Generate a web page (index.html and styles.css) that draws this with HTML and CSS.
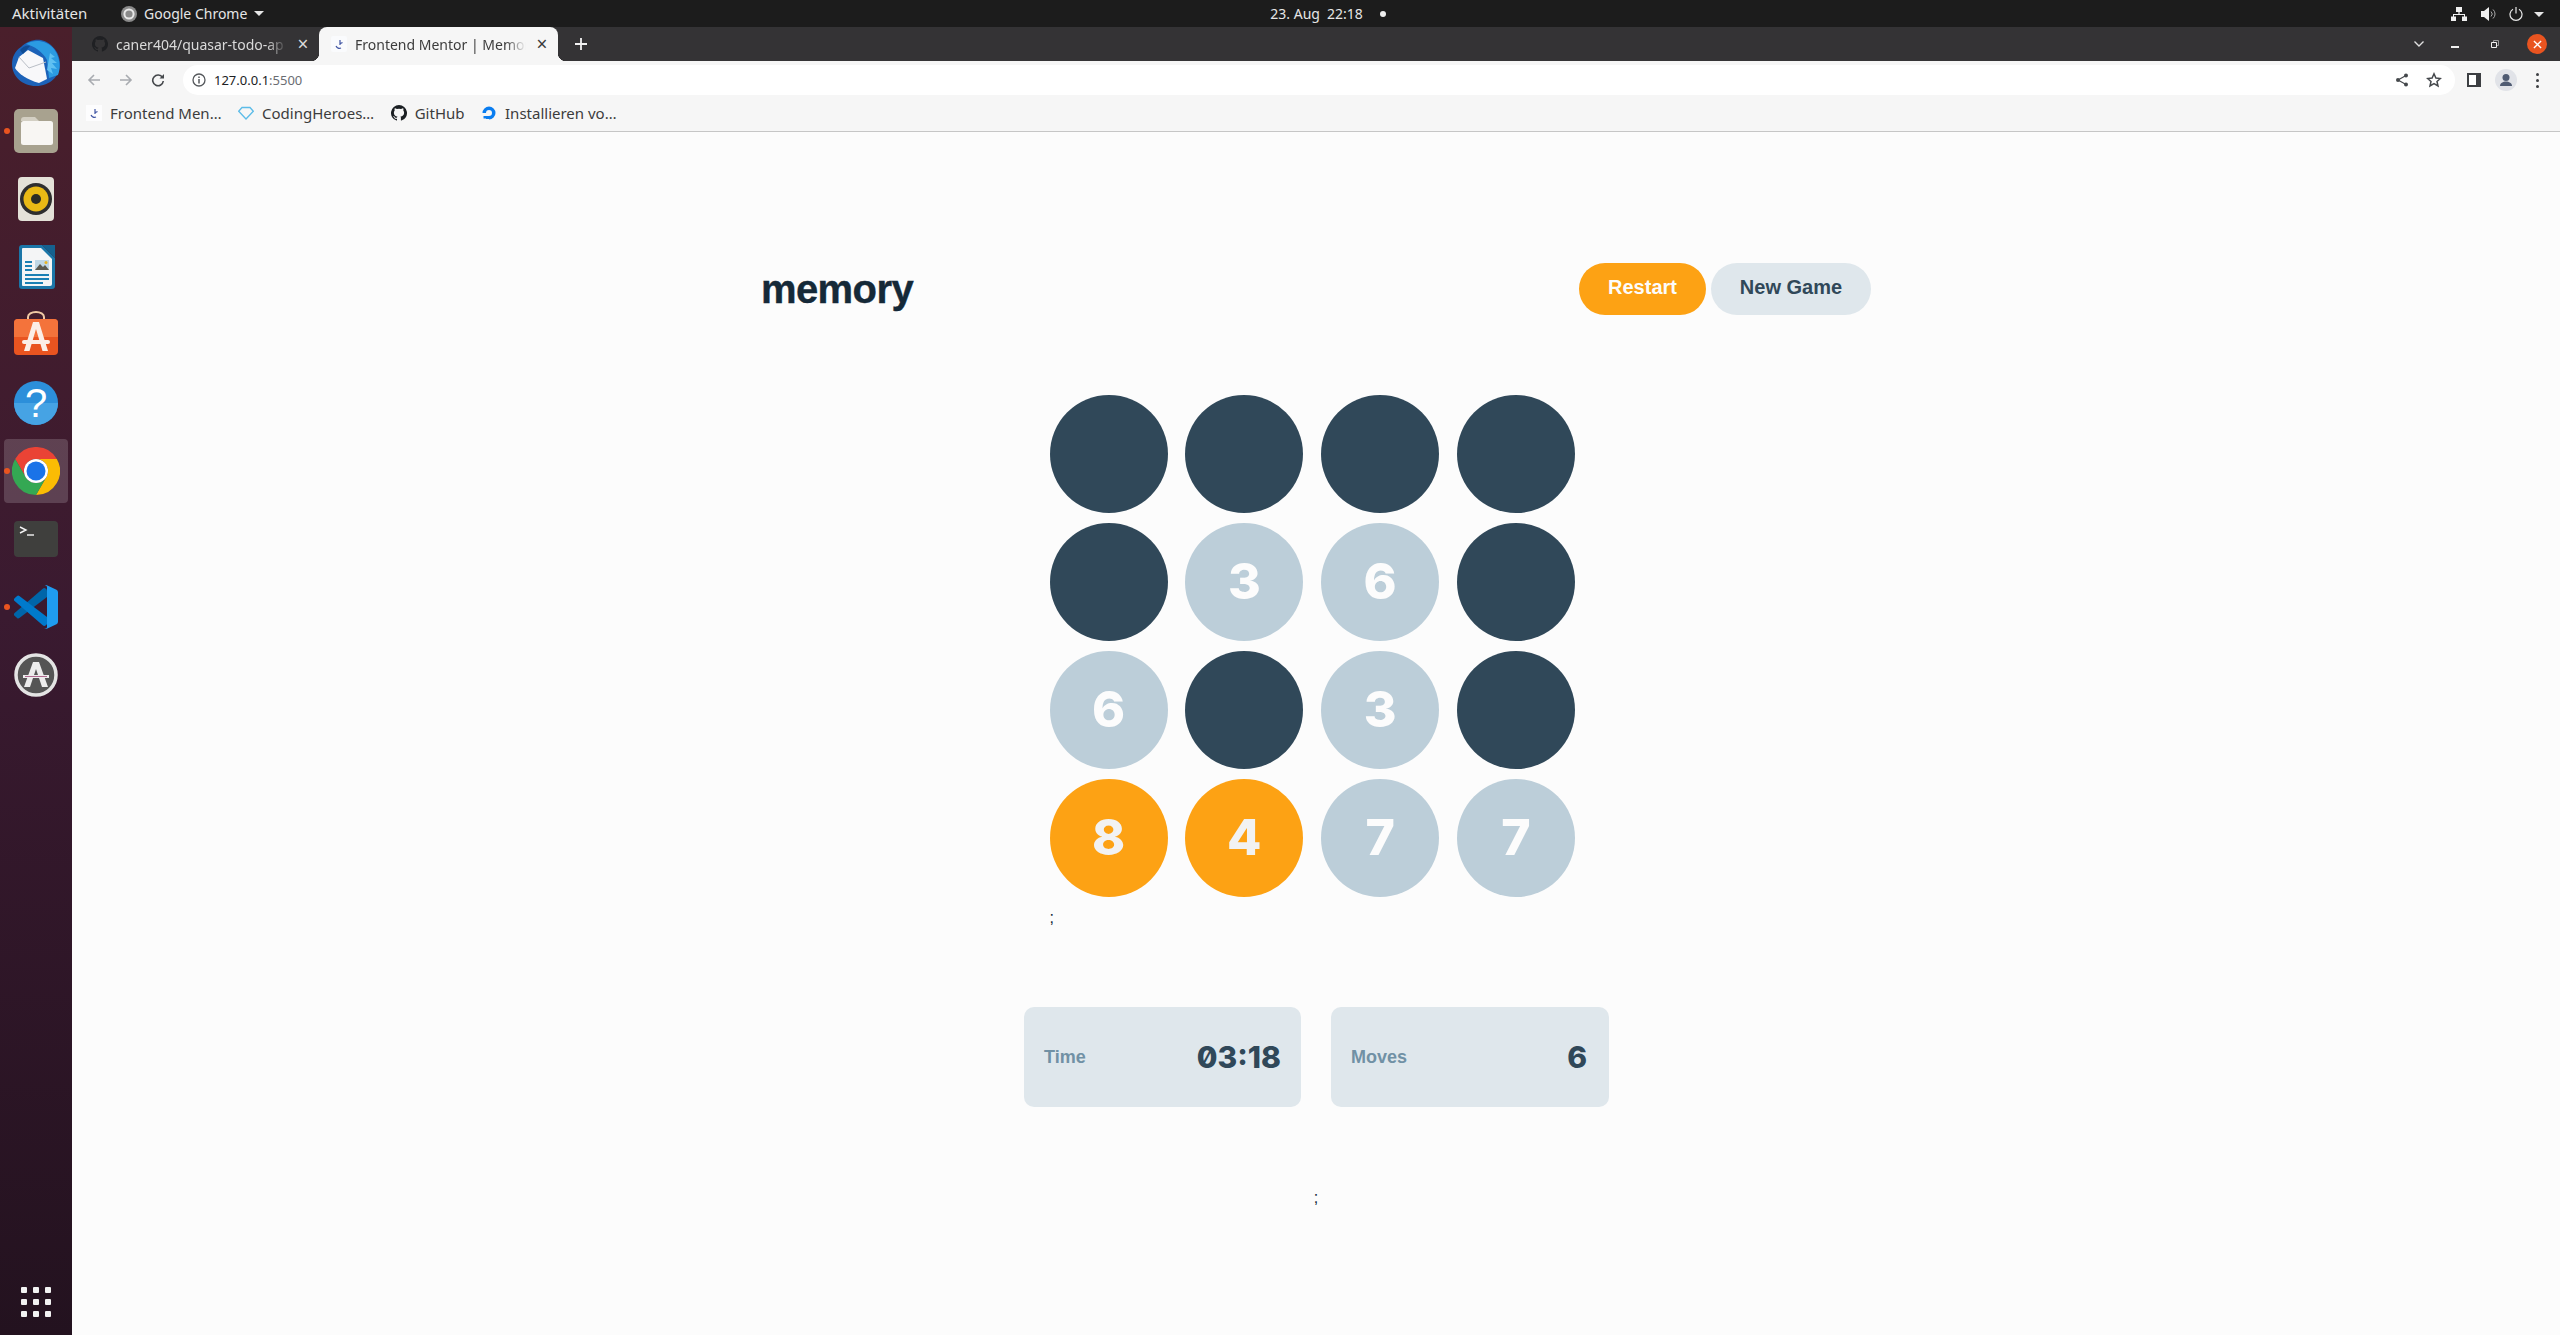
FILE: index.html
```html
<!DOCTYPE html>
<html lang="de">
<head>
<meta charset="utf-8">
<title>Frontend Mentor | Memory game</title>
<link rel="stylesheet" href="styles.css">
</head>
<body>
<header class="topbar">
  <div class="top-left">
    <span class="activities">Aktivitäten</span>
    <span class="app-menu">
      <svg class="app-icon" viewBox="0 0 16 16"><circle cx="8" cy="8" r="8" fill="#8a8a8a"/><circle cx="8" cy="8" r="4.6" fill="none" stroke="#e8e8e8" stroke-width="2"/></svg>
      <span>Google Chrome</span>
      <i class="caret"></i>
    </span>
  </div>
  <div class="clock"><span>23. Aug</span><span>22:18</span><i class="clock-dot"></i></div>
  <div class="tray">
    <svg class="tray-net" viewBox="0 0 16 14"><path d="M5 0h6v5H8.600v2H14v2.500h2V14h-5V9.500h2V8H3v1.500h2V14H0V9.500h2V7h5.400V5H5z" fill="#f0f0f0"/></svg>
    <svg class="tray-vol" viewBox="0 0 15 14"><path d="M0 4h3l5-4v14l-5-4H0z" fill="#f0f0f0"/><path d="M10 4.500a3.500 3.500 0 0 1 0 5M12 2.500a6 6 0 0 1 0 9" fill="none" stroke="#aaa" stroke-width="1"/></svg>
    <svg class="tray-pow" viewBox="0 0 14 14"><path d="M4 2.200a6 6 0 1 0 6 0M7 0v6.500" fill="none" stroke="#e8e8e8" stroke-width="1.200"/></svg>
    <i class="caret tray-caret"></i>
  </div>
</header>

<div class="desktop">
  <nav class="dock">
    <div class="dock-item">
      <svg class="ic-48" viewBox="0 0 48 48">
        <path d="M9 8C15 2 23 0 29 1c9 2 19 11 19 24 0 12-10 22-24 22C10 47 0 37 0 25c0-7 3-13 9-17z" fill="#1c62b8"/>
        <path d="M14 5c8-5 21-4 28 5 6 8 7 18 4 26l-9 3-2-18C31 13 22 7 14 5z" fill="#2b9be2"/>
        <path d="M38 14l5 4-4 1 6 5-5 0 5 6-6-1 2 6-6-4z" fill="#5fc0f2"/>
        <path d="M7 18l9-7 15 8 4 21-8 4C15 41 6 34 3 29z" fill="#f8f8fa"/>
        <path d="M7 18l10 11 17-6" fill="none" stroke="#b9bec6" stroke-width="1"/>
        <path d="M8 11c3-4 7-5 10-4l-7 8z" fill="#0f4c94"/>
      </svg>
    </div>
    <div class="dock-item running">
      <svg class="ic-44" viewBox="0 0 44 44">
        <rect width="44" height="44" rx="5" fill="#a8a28f"/>
        <path d="M7 11a3 3 0 0 1 3-3h11l4 4H7z" fill="#d3cfc3"/>
        <rect x="7" y="12" width="32" height="24" rx="2.500" fill="#f8f6f3"/>
      </svg>
    </div>
    <div class="dock-item">
      <svg class="ic-44" viewBox="0 0 44 44">
        <rect x="4" y="0" width="36" height="44" rx="4" fill="#e4e1d8"/>
        <circle cx="22" cy="22" r="16" fill="#2e2e2e"/>
        <circle cx="22" cy="22" r="12.500" fill="#e9b915"/>
        <circle cx="22" cy="22" r="5" fill="#2b2b25"/>
      </svg>
    </div>
    <div class="dock-item">
      <svg class="ic-44" viewBox="0 0 44 44">
        <path d="M5 3a3 3 0 0 1 3-3h20l13 13v28a3 3 0 0 1-3 3H8a3 3 0 0 1-3-3z" fill="#1b76a8"/>
        <path d="M8 4a1 1 0 0 1 1-1h18l11 11v25a2 2 0 0 1-2 2H9a1 1 0 0 1-1-1z" fill="#f4f5f6"/>
        <path d="M28 0h13v13z" fill="#15618f"/>
        <path d="M11 16h7v2h-7zM11 20h7v2h-7zM11 24h7v2h-7zM11 29h24v2H11zM11 33h24v2H11zM11 37h18v2H11z" fill="#1b80b4"/>
        <rect x="21" y="15" width="14" height="10" fill="#bfd8e6"/>
        <path d="M21 25l5-6 3 3 2-2 4 5z" fill="#5a5a50"/>
        <circle cx="32" cy="17.500" r="1.500" fill="#e6b422"/>
      </svg>
    </div>
    <div class="dock-item">
      <svg class="ic-44 ic-bag" viewBox="0 2 44 44">
        <path d="M14 8V6a8 5 0 0 1 16 0v2" fill="none" stroke="#f0c9a4" stroke-width="2"/>
        <rect y="8" width="44" height="36" rx="4" fill="#e95420"/>
        <path d="M0 12a4 4 0 0 1 4-4h36a4 4 0 0 1 4 4v14H0z" fill="#f4733b"/>
        <path d="M19 11h6l9 29h-5.500L22 18l-6.500 22H10z" fill="#fbeee6"/>
        <rect x="8" y="29" width="28" height="4" rx="2" fill="#fbeee6"/>
      </svg>
    </div>
    <div class="dock-item">
      <svg class="ic-44" viewBox="0 0 44 44">
        <circle cx="22" cy="22" r="22" fill="#2c8fda"/>
        <path d="M0 22h44a22 22 0 0 1-44 0z" fill="#46a3e4"/>
        <text x="22" y="36" class="help-mark">?</text>
      </svg>
    </div>
    <div class="dock-item running active">
      <svg class="ic-48" viewBox="0 0 48 48">
        <path d="M24 12H44.800A24 24 0 0 0 3.200 12L13.600 30A12 12 0 0 1 24 12z" fill="#ea4335"/>
        <path d="M24 12H44.800A24 24 0 0 1 24 48L34.400 30A12 12 0 0 0 24 12z" fill="#fbbc04"/>
        <path d="M3.200 12A24 24 0 0 0 24 48L34.400 30A12 12 0 0 1 13.600 30z" fill="#34a853"/>
        <circle cx="24" cy="24" r="12" fill="#fff"/>
        <circle cx="24" cy="24" r="9.500" fill="#1a73e8"/>
      </svg>
    </div>
    <div class="dock-item">
      <svg class="ic-term" viewBox="0 0 44 36">
        <rect width="44" height="36" rx="4" fill="#3f3f3d"/>
        <path d="M6 6l6 3-6 3" fill="none" stroke="#f4f4f4" stroke-width="1.400"/>
        <path d="M13 14h7" stroke="#f4f4f4" stroke-width="1.400"/>
      </svg>
    </div>
    <div class="dock-item running">
      <svg class="ic-44" viewBox="0 0 100 100">
        <path d="M1.400 63.600a4.200 4.200 0 0 0 0 6.200l5.500 5a4.200 4.200 0 0 0 5.300.2L75 27.300V13a6 6 0 0 0-9.700-4.600z" fill="#0065a9"/>
        <path d="M1.400 36.400a4.200 4.200 0 0 1 0-6.200l5.500-5a4.200 4.200 0 0 1 5.300-.2L75 72.700V87a6 6 0 0 1-9.700 4.600z" fill="#007acc"/>
        <path d="M68.800 97.900a6.200 6.200 0 0 0 7.100 1.200l20.600-9.900a6.200 6.200 0 0 0 3.500-5.600V16.400a6.200 6.200 0 0 0-3.500-5.600L75.900.9a6.200 6.200 0 0 0-7.100 1.200c2.300-2.300 6.200-.7 6.200 2.600v90.600c0 3.300-3.900 4.900-6.200 2.600z" fill="#1f9cf0"/>
      </svg>
    </div>
    <div class="dock-item">
      <svg class="ic-44" viewBox="0 0 44 44">
        <circle cx="22" cy="22" r="20" fill="#555" stroke="#e4e4e4" stroke-width="3.500"/>
        <path d="M19 9h6l9 25h-6l-6-18-6 18h-6z" fill="#ececec"/>
        <rect x="9" y="22" width="26" height="3" fill="#ececec"/>
        <rect x="11" y="23" width="22" height="1" fill="#b06a90"/>
      </svg>
    </div>
    <div class="dock-apps">
      <i></i><i></i><i></i><i></i><i></i><i></i><i></i><i></i><i></i>
    </div>
  </nav>

  <div class="window">
    <div class="tabstrip">
      <div class="tab">
        <svg class="fav" viewBox="0 0 16 16"><path d="M8 0a8 8 0 0 0-2.500 15.600c.4.100.5-.2.500-.4v-1.400c-2.200.5-2.700-1-2.700-1-.4-.9-.9-1.200-.9-1.200-.7-.5.100-.5.100-.5.800.1 1.200.8 1.200.8.700 1.200 1.900.9 2.300.7.100-.5.300-.9.500-1.100-1.800-.2-3.600-.9-3.600-4 0-.9.300-1.600.8-2.100-.1-.2-.4-1 .1-2.100 0 0 .7-.2 2.200.8a7.600 7.600 0 0 1 4 0c1.500-1 2.200-.8 2.200-.8.400 1.100.2 1.900.1 2.100.5.600.8 1.300.8 2.100 0 3.100-1.900 3.800-3.700 4 .3.300.5.800.5 1.500v2.200c0 .2.100.5.600.4A8 8 0 0 0 8 0z" fill="#1f2023"/></svg>
        <span class="tab-title">caner404/quasar-todo-ap</span>
        <span class="tab-x">×</span>
      </div>
      <div class="tab tab-active">
        <svg class="fav" viewBox="0 0 16 16"><rect width="16" height="16" rx="2" fill="#fafbfd"/><path d="M9 4v5M11.500 6.500l-2 1M5 10c1 2 3 3 5 2" fill="none" stroke="#3f54a3" stroke-width="1.200"/></svg>
        <span class="tab-title">Frontend Mentor | Memor</span>
        <span class="tab-x">×</span>
      </div>
      <svg class="newtab" viewBox="0 0 12 12"><path d="M6 0v12M0 6h12" stroke="#f2f2f2" stroke-width="1.800"/></svg>
      <div class="win-controls">
        <svg class="win-chev" viewBox="0 0 10 6"><path d="M.5.500l4.500 4.500L9.500.500" fill="none" stroke="#e0e0e0" stroke-width="1.400"/></svg>
        <i class="win-min"></i>
        <svg class="win-restore" viewBox="0 0 8 8"><path d="M.5 2.500h5v5h-5z" fill="none" stroke="#f0f0f0" stroke-width="1"/><path d="M2.500 2V.5h5v5H6" fill="none" stroke="#999" stroke-width="1"/></svg>
        <span class="win-close"><svg viewBox="0 0 10 10"><path d="M1 1l8 8M9 1l-8 8" stroke="#fff" stroke-width="1.500"/></svg></span>
      </div>
    </div>

    <div class="toolbar">
      <svg class="nav-ic" viewBox="0 0 14 14"><path d="M13 7H2M7 2L2 7l5 5" fill="none" stroke="#a8abb0" stroke-width="1.600"/></svg>
      <svg class="nav-ic" viewBox="0 0 14 14"><path d="M1 7h11M7 2l5 5-5 5" fill="none" stroke="#a8abb0" stroke-width="1.600"/></svg>
      <svg class="nav-ic" viewBox="0 0 14 14"><path d="M11.500 4.500A5.300 5.300 0 1 0 12.300 8" fill="none" stroke="#45484c" stroke-width="1.600"/><path d="M8.500 5.500H13V1z" fill="#45484c"/></svg>
      <div class="omnibox">
        <svg class="info-ic" viewBox="0 0 14 14"><circle cx="7" cy="7" r="6" fill="none" stroke="#55585c" stroke-width="1.300"/><path d="M7 6v4.500M7 3.500v1.500" stroke="#55585c" stroke-width="1.500"/></svg>
        <span class="url"><b>127.0.0.1</b>:5500</span>
        <svg class="omni-share" viewBox="0 0 14 14"><path d="M11 2.500L3 7l8 4.500" fill="none" stroke="#45484c" stroke-width="1.200"/><circle cx="11" cy="2.500" r="2" fill="#45484c"/><circle cx="3" cy="7" r="2" fill="#45484c"/><circle cx="11" cy="11.500" r="2" fill="#45484c"/></svg>
        <svg class="omni-star" viewBox="0 0 16 16"><path d="M8 1.800l1.900 4.200 4.500.5-3.400 3 1 4.500L8 11.700 4 14l1-4.500-3.400-3 4.500-.5z" fill="none" stroke="#45484c" stroke-width="1.500"/></svg>
      </div>
      <svg class="panel-ic" viewBox="0 0 14 14"><path d="M0 0h14v14H0z" fill="#3d3f43"/><rect x="2" y="2" width="7" height="10" fill="#fff"/></svg>
      <span class="avatar"><svg viewBox="0 0 22 22"><circle cx="11" cy="8.500" r="3.500" fill="#4f5b72"/><path d="M5 17c0-3 3-4.500 6-4.500s6 1.500 6 4.500z" fill="#4f5b72"/></svg></span>
      <span class="kebab"><i></i><i></i><i></i></span>
    </div>

    <div class="bookmarks">
      <span class="bm">
        <svg class="fav" viewBox="0 0 16 16"><rect width="16" height="16" fill="#fdfdfe"/><path d="M9 4v5M11.500 6.500l-2 1M5 10c1 2 3 3 5 2" fill="none" stroke="#3f54a3" stroke-width="1.200"/></svg>
        <span>Frontend Men…</span>
      </span>
      <span class="bm">
        <svg class="fav" viewBox="0 0 16 16"><path d="M4 2.500h8l3.300 3.800L8 14 .7 6.300z" fill="none" stroke="#5cbce8" stroke-width="1.300"/></svg>
        <span>CodingHeroes…</span>
      </span>
      <span class="bm">
        <svg class="fav" viewBox="0 0 16 16"><path d="M8 0a8 8 0 0 0-2.500 15.600c.4.100.5-.2.500-.4v-1.400c-2.200.5-2.700-1-2.700-1-.4-.9-.9-1.200-.9-1.200-.7-.5.100-.5.100-.5.800.1 1.200.8 1.200.8.700 1.200 1.900.9 2.300.7.100-.5.300-.9.500-1.100-1.800-.2-3.600-.9-3.600-4 0-.9.300-1.600.8-2.100-.1-.2-.4-1 .1-2.100 0 0 .7-.2 2.200.8a7.600 7.600 0 0 1 4 0c1.500-1 2.200-.8 2.200-.8.400 1.100.2 1.900.1 2.100.5.600.8 1.300.8 2.100 0 3.100-1.900 3.800-3.700 4 .3.300.5.800.5 1.500v2.200c0 .2.100.5.600.4A8 8 0 0 0 8 0z" fill="#1b1f23"/></svg>
        <span>GitHub</span>
      </span>
      <span class="bm">
        <svg class="fav" viewBox="0 0 16 16"><path d="M8 14.500A6.500 6.500 0 1 0 1.500 8H5a3 3 0 1 1 3 3z" fill="#0a7df0"/><path d="M5 11h3v3H5zM2.500 11H5v2.500H2.500z" fill="#0a7df0"/></svg>
        <span>Installieren vo…</span>
      </span>
    </div>

    <main class="page">
      <div class="game">
        <div class="game-head">
          <h1 class="logo">memory</h1>
          <div class="actions">
            <button class="btn btn-primary">Restart</button>
            <button class="btn btn-secondary">New Game</button>
          </div>
        </div>

        <div class="board-wrap">
          <div class="board">
            <span class="disc"></span>
            <span class="disc"></span>
            <span class="disc"></span>
            <span class="disc"></span>
            <span class="disc"></span>
            <span class="disc open">3</span>
            <span class="disc open">6</span>
            <span class="disc"></span>
            <span class="disc open">6</span>
            <span class="disc"></span>
            <span class="disc open">3</span>
            <span class="disc"></span>
            <span class="disc hot">8</span>
            <span class="disc hot">4</span>
            <span class="disc open">7</span>
            <span class="disc open">7</span>
          </div>
          <p class="stray">;</p>
        </div>

        <div class="stats">
          <div class="stat">
            <span class="stat-label">Time</span>
            <span class="stat-value">03:18</span>
          </div>
          <div class="stat">
            <span class="stat-label">Moves</span>
            <span class="stat-value">6</span>
          </div>
        </div>
        <p class="stray stray-center">;</p>
      </div>
    </main>
  </div>
</div>
</body>
</html>
```
FILE: styles.css
```css
* { box-sizing: border-box; }
html, body { margin: 0; height: 100%; }
body {
  width: 2560px;
  height: 1335px;
  overflow: hidden;
  display: flex;
  flex-direction: column;
  font-family: "Liberation Sans", Arial, sans-serif;
  background: #fcfcfc;
}

/* top bar */
.topbar {
  height: 27px;
  flex: none;
  background: #1c1c1c;
  color: #e6e6e6;
  font: 14px/27px "Noto Sans", sans-serif;
  display: grid;
  grid-template-columns: 1fr auto 1fr;
  padding: 0 16px 0 12px;
}
.top-left { display: flex; align-items: center; }
.activities { width: 109px; font-size: 15px; }
.app-menu { display: flex; align-items: center; gap: 7px; }
.app-icon { width: 16px; height: 16px; }
.caret {
  width: 0;
  height: 0;
  border-left: 5px solid transparent;
  border-right: 5px solid transparent;
  border-top: 5px solid #e6e6e6;
}
.clock { display: flex; align-items: center; gap: 7px; padding-left: 100px; }
.clock-dot { width: 6px; height: 6px; border-radius: 50%; background: #eee; margin-left: 10px; }
.tray { display: flex; align-items: center; justify-content: flex-end; }
.tray-net { width: 16px; height: 14px; margin-right: 14px; }
.tray-vol { width: 15px; height: 14px; margin-right: 13px; }
.tray-pow { width: 14px; height: 14px; margin-right: 11px; }
.tray-caret { margin-top: 1px; }

.desktop { flex: 1; display: flex; min-height: 0; }

/* dock */
.dock {
  width: 72px;
  flex: none;
  display: flex;
  flex-direction: column;
  align-items: center;
  padding-top: 2px;
  background: linear-gradient(180deg, #4a1f2b 0%, #3a1a30 45%, #23121f 100%);
}
.dock-item {
  position: relative;
  width: 64px;
  height: 68px;
  flex: none;
  display: flex;
  align-items: center;
  justify-content: center;
}
.dock-item.running::before {
  content: "";
  position: absolute;
  left: 0;
  top: 31px;
  width: 6px;
  height: 6px;
  border-radius: 50%;
  background: #e95420;
}
.dock-item.active { background: rgba(255,255,255,.17); border-radius: 4px; height: 64px; margin: 2px 0; }
.dock-item.active::before { left: 0; top: 29px; }
.ic-48 { width: 48px; height: 48px; }
.ic-44 { width: 44px; height: 44px; }
.ic-bag { overflow: visible; }
.ic-term { width: 44px; height: 36px; }
.help-mark { font: 40px "Liberation Sans", sans-serif; fill: #fff; text-anchor: middle; }
.dock-apps {
  margin-top: auto;
  margin-bottom: 18px;
  display: grid;
  grid-template-columns: repeat(3, 6px);
  gap: 6px;
}
.dock-apps i { width: 6px; height: 6px; background: #f2f2f2; border-radius: 1px; }

/* browser */
.window { flex: 1; min-width: 0; display: flex; flex-direction: column; }
.tabstrip {
  height: 34px;
  flex: none;
  display: flex;
  align-items: center;
  background: #343335;
  padding-left: 8px;
  font: 14px "Noto Sans", sans-serif;
}
.tab {
  width: 239px;
  height: 34px;
  display: flex;
  align-items: center;
  gap: 8px;
  padding: 0 8px 0 12px;
  color: #dadada;
}
.tab-active {
  position: relative;
  background: #f6f6f6;
  color: #3c3c3c;
  border-radius: 8px 8px 0 0;
}
.tab-active::before, .tab-active::after {
  content: "";
  position: absolute;
  bottom: 0;
  width: 8px;
  height: 8px;
}
.tab-active::before { left: -8px; background: radial-gradient(circle at 0 0, transparent 8px, #f6f6f6 8.500px); }
.tab-active::after { right: -8px; background: radial-gradient(circle at 100% 0, transparent 8px, #f6f6f6 8.500px); }
.fav { width: 16px; height: 16px; flex: none; }
.tab-title {
  flex: 1;
  min-width: 0;
  white-space: nowrap;
  -webkit-mask-image: linear-gradient(90deg, #000 88%, transparent);
  mask-image: linear-gradient(90deg, #000 88%, transparent);
}
.tab-x { width: 16px; text-align: center; font-size: 19px; line-height: 16px; }
.newtab { width: 12px; height: 12px; margin-left: 17px; }
.win-controls { margin-left: auto; display: flex; align-items: center; }
.win-chev { width: 10px; height: 6px; margin-right: 27px; }
.win-min { width: 8px; height: 1.500px; background: #f0f0f0; margin-top: 6px; margin-right: 32px; }
.win-restore { width: 8px; height: 8px; margin-right: 28px; }
.win-close {
  width: 20px;
  height: 20px;
  border-radius: 50%;
  background: #e95420;
  display: flex;
  align-items: center;
  justify-content: center;
  margin-right: 13px;
}
.win-close svg { width: 9px; height: 9px; }

.toolbar {
  height: 38px;
  flex: none;
  background: #f6f6f6;
  display: flex;
  align-items: center;
  padding: 4px 0 4px 15px;
}
.nav-ic { width: 14px; height: 14px; margin-right: 18px; }
.omnibox {
  width: 2272px;
  height: 30px;
  background: #fff;
  border-radius: 15px;
  display: flex;
  align-items: center;
  padding-left: 9px;
  font: 13px "Noto Sans", sans-serif;
}
.info-ic { width: 14px; height: 14px; margin-right: 8px; }
.url { color: #6a6d72; flex: 1; }
.url b { color: #202124; font-weight: 400; }
.omni-share { width: 14px; height: 14px; margin-right: 17px; }
.omni-star { width: 16px; height: 16px; margin-right: 13px; }
.panel-ic { width: 14px; height: 14px; margin-left: 12px; }
.avatar {
  width: 22px;
  height: 22px;
  border-radius: 50%;
  background: #e1e3e8;
  margin-left: 14px;
}
.avatar svg { display: block; width: 22px; height: 22px; }
.kebab { display: flex; flex-direction: column; gap: 3px; margin-left: 19px; }
.kebab i { width: 3px; height: 3px; border-radius: 50%; background: #3d3f43; }

.bookmarks {
  height: 33px;
  flex: none;
  background: #f6f6f6;
  border-bottom: 1px solid #c6c6c6;
  display: flex;
  align-items: center;
  padding: 0 0 5px 14px;
  gap: 16.500px;
  font: 15px "Noto Sans", sans-serif;
  color: #3c3c3c;
}
.bm { display: flex; align-items: center; gap: 8px; }

/* memory page */
.page { flex: 1; background: #fcfcfc; min-height: 0; }
.game {
  width: 1110px;
  margin: 0 auto;
  padding-top: 131px;
}
.game-head { display: flex; justify-content: space-between; align-items: center; }
.logo {
  margin: 0;
  font-size: 40px;
  font-weight: 700;
  letter-spacing: -.6px;
  -webkit-text-stroke: .4px #152938;
  color: #152938;
}
.actions { display: flex; gap: 5px; }
.btn {
  height: 52px;
  border: 0;
  border-radius: 26px;
  padding: 0 0 3px;
  font: 700 20px "Liberation Sans", Arial, sans-serif;
}
.btn-primary { width: 127px; background: #fda214; color: #fcfcfc; }
.btn-secondary { width: 160px; background: #dfe7ec; color: #304859; }
.board-wrap { width: 533px; margin: 80px auto 0; }
.board { display: grid; grid-template-columns: repeat(4, 118px); gap: 10px 17.800px; }
.disc {
  width: 118px;
  height: 118px;
  border-radius: 50%;
  background: #304859;
  color: #fcfcfc;
  font: 800 50px/116px Inter, sans-serif;
  text-align: center;
}
.disc.open { background: #bcced9; }
.disc.hot { background: #fda214; color: #f2f2f2; }
.stray { margin: 12px 0 0; font-size: 16px; line-height: 18px; color: #152938; }
.stats { display: flex; justify-content: center; gap: 30px; margin-top: 80px; padding-left: 1px; }
.stat {
  width: 278px;
  height: 100px;
  background: #dfe7ec;
  border-radius: 10px;
  padding: 0 20px;
  display: flex;
  justify-content: space-between;
  align-items: center;
}
.stat:first-child { width: 277px; }
.stat:last-child { padding-right: 22px; }
.stat-label { font-size: 18px; font-weight: 700; color: #7191a5; }
.stat-value {
  font: 800 30px Inter, sans-serif;
  font-feature-settings: "zero" 1;
  color: #304859;
}
.stray-center { margin-top: 82px; text-align: center; }
```
